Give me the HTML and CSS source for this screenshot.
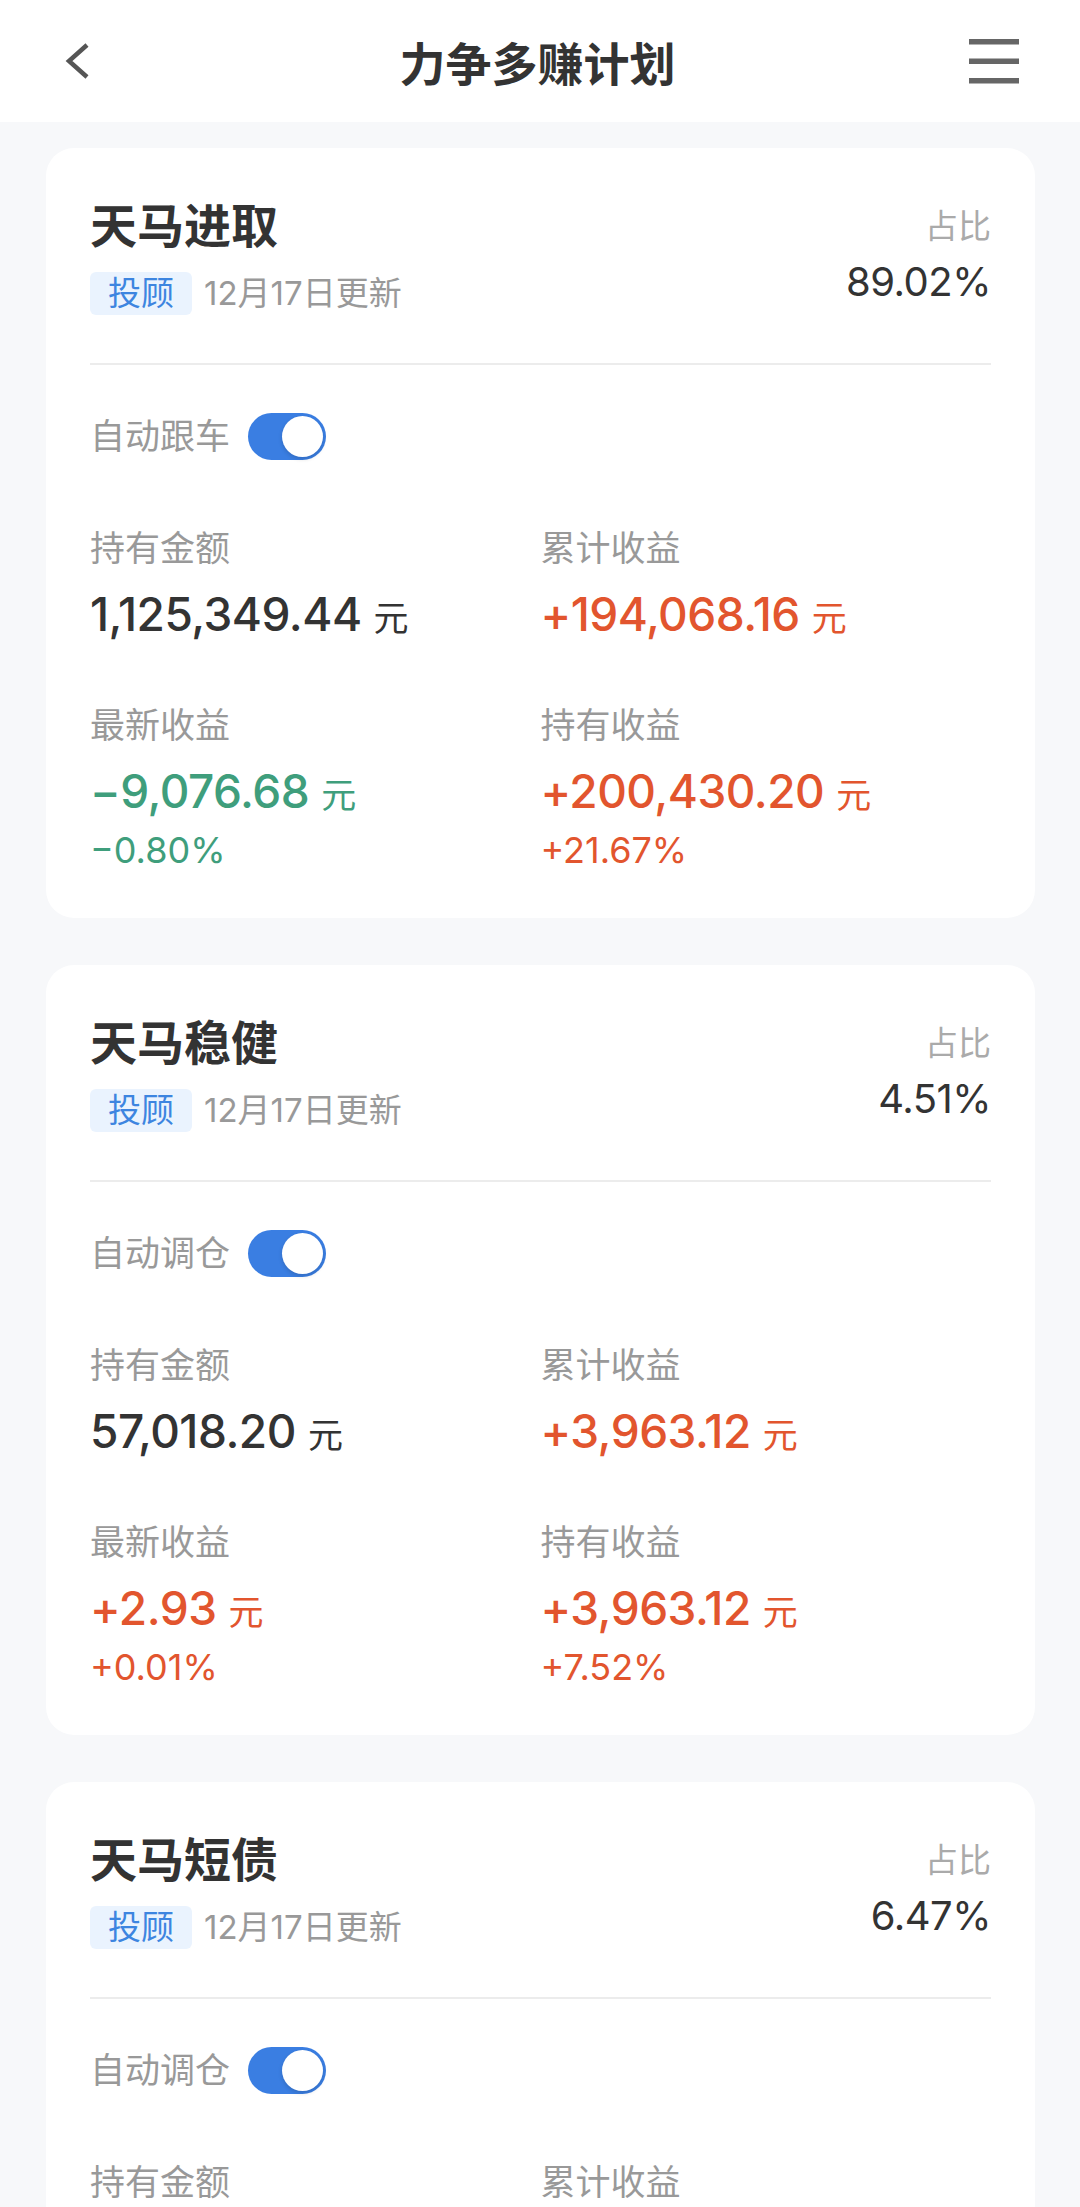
FILE: index.html
```html
<!DOCTYPE html>
<html lang="zh-CN">
<head>
  <meta charset="UTF-8" />
  <meta name="viewport" content="width=device-width, initial-scale=1.0"/>
  <title>力争多赚计划</title>
  <link rel="stylesheet" href="styles.css">
</head>
<body>
  <header class="nav">
    <a class="nav-back" href="#">
      <svg width="40" height="40" viewBox="0 0 40 40"><polyline points="31,4 13,20 31,36" fill="none" stroke="#555" stroke-width="4.5"/></svg>
    </a>
    <h1 class="nav-title">力争多赚计划</h1>
    <a class="nav-menu" href="#">
      <svg width="50" height="50" viewBox="0 0 50 50" fill="#666">
        <rect x="0" y="3" width="50" height="5.5"/>
        <rect x="0" y="22.5" width="50" height="5.5"/>
        <rect x="0" y="42" width="50" height="5.5"/>
      </svg>
    </a>
  </header>

  <main class="plans">
    <!-- 天马进取 -->
    <section class="plan-card">
      <div class="plan-head">
        <div>
          <h2 class="plan-name">天马进取</h2>
          <div class="plan-meta"><span class="tag">投顾</span><span class="plan-date">12月17日更新</span></div>
        </div>
        <div class="plan-ratio">
          <div class="ratio-label">占比</div>
          <div class="ratio-value">89.02%</div>
        </div>
      </div>
      <div class="plan-switch"><span>自动跟车</span><span class="toggle"></span></div>
      <div class="plan-stats">
        <div class="stat">
          <div class="stat-label">持有金额</div>
          <div class="stat-value">1,125,349.44<span class="unit">元</span></div>
        </div>
        <div class="stat">
          <div class="stat-label">累计收益</div>
          <div class="stat-value up">+194,068.16<span class="unit">元</span></div>
        </div>
        <div class="stat">
          <div class="stat-label">最新收益</div>
          <div class="stat-value down">−9,076.68<span class="unit">元</span></div>
          <div class="stat-rate down">−0.80%</div>
        </div>
        <div class="stat">
          <div class="stat-label">持有收益</div>
          <div class="stat-value up">+200,430.20<span class="unit">元</span></div>
          <div class="stat-rate up">+21.67%</div>
        </div>
      </div>
    </section>

    <!-- 天马稳健 -->
    <section class="plan-card">
      <div class="plan-head">
        <div>
          <h2 class="plan-name">天马稳健</h2>
          <div class="plan-meta"><span class="tag">投顾</span><span class="plan-date">12月17日更新</span></div>
        </div>
        <div class="plan-ratio">
          <div class="ratio-label">占比</div>
          <div class="ratio-value">4.51%</div>
        </div>
      </div>
      <div class="plan-switch"><span>自动调仓</span><span class="toggle"></span></div>
      <div class="plan-stats">
        <div class="stat">
          <div class="stat-label">持有金额</div>
          <div class="stat-value">57,018.20<span class="unit">元</span></div>
        </div>
        <div class="stat">
          <div class="stat-label">累计收益</div>
          <div class="stat-value up">+3,963.12<span class="unit">元</span></div>
        </div>
        <div class="stat">
          <div class="stat-label">最新收益</div>
          <div class="stat-value up">+2.93<span class="unit">元</span></div>
          <div class="stat-rate up">+0.01%</div>
        </div>
        <div class="stat">
          <div class="stat-label">持有收益</div>
          <div class="stat-value up">+3,963.12<span class="unit">元</span></div>
          <div class="stat-rate up">+7.52%</div>
        </div>
      </div>
    </section>

    <!-- 天马短债 -->
    <section class="plan-card">
      <div class="plan-head">
        <div>
          <h2 class="plan-name">天马短债</h2>
          <div class="plan-meta"><span class="tag">投顾</span><span class="plan-date">12月17日更新</span></div>
        </div>
        <div class="plan-ratio">
          <div class="ratio-label">占比</div>
          <div class="ratio-value">6.47%</div>
        </div>
      </div>
      <div class="plan-switch"><span>自动调仓</span><span class="toggle"></span></div>
      <div class="plan-stats">
        <div class="stat">
          <div class="stat-label">持有金额</div>
        </div>
        <div class="stat">
          <div class="stat-label">累计收益</div>
        </div>
      </div>
    </section>
  </main>
</body>
</html>
```

FILE: styles.css
```css
:root {
  --bg: #f7f8fa;
  --text: #333;
  --muted: #999;
  --line: #ececec;
  --blue: #3a7ee2;
  --up: #e2552e;
  --down: #3f9e7c;
}

body {
  margin: 0;
  background: var(--bg);
  color: var(--text);
  font-family: Inter, "Noto Sans CJK SC", sans-serif;
}

/* top bar */
.nav {
  height: 122px;
  background: #fff;
  display: grid;
  grid-template-columns: 1fr auto 1fr;
  align-items: center;
  padding: 0 61px 0 56px;
}

.nav-back, .nav-menu {
  display: flex;
}

.nav-menu {
  justify-self: end;
}

.nav-title {
  margin: 0;
  font-size: 46px;
  font-weight: 700;
  color: var(--text);
}

/* cards */
.plans {
  display: flex;
  flex-direction: column;
  gap: 47px;
  padding: 26px 45px 0 46px;
}

.plan-card {
  background: #fff;
  border-radius: 28px;
  padding: 0 44px 46px;
}

.plan-head {
  display: flex;
  justify-content: space-between;
  padding: 52px 0 48px;
  border-bottom: 2px solid var(--line);
}

.plan-name {
  margin: 0;
  font-size: 47px;
  line-height: 52px;
  font-weight: 600;
}

.plan-meta {
  display: flex;
  align-items: center;
  gap: 12px;
  height: 43px;
  margin-top: 20px;
}

.tag {
  height: 43px;
  line-height: 43px;
  padding: 0 18px;
  font-size: 33px;
  color: #3d85e0;
  background: #eaf3fe;
  border-radius: 6px;
}

.plan-date {
  font-size: 33px;
  line-height: 43px;
  color: var(--muted);
}

.plan-ratio {
  text-align: right;
}

.ratio-label {
  font-size: 33px;
  line-height: 52px;
  color: #aaa;
}

.ratio-value {
  margin-top: 6px;
  font-size: 40px;
  line-height: 48px;
  letter-spacing: -0.5px;
}

.plan-switch {
  display: flex;
  align-items: center;
  gap: 18px;
  height: 47px;
  padding-top: 48px;
  font-size: 35px;
  line-height: 47px;
  color: var(--muted);
}

.toggle {
  position: relative;
  width: 78px;
  height: 47px;
  border-radius: 24px;
  background: var(--blue);
}

.toggle::after {
  content: "";
  position: absolute;
  top: 3px;
  right: 3px;
  width: 41px;
  height: 41px;
  border-radius: 50%;
  background: #fff;
  box-shadow: 0 2px 4px rgba(0, 0, 0, 0.15);
}

.plan-stats {
  display: grid;
  grid-template-columns: 1fr 1fr;
  row-gap: 63px;
  margin-top: 68px;
}

.stat-label {
  font-size: 35px;
  line-height: 40px;
  color: var(--muted);
}

.stat-value {
  margin-top: 18px;
  font-size: 46px;
  line-height: 56px;
  font-weight: 500;
  letter-spacing: -0.5px;
}

.unit {
  margin-left: 12px;
  font-size: 35px;
  line-height: 1;
  font-weight: 400;
  letter-spacing: 0;
}

.stat-rate {
  margin-top: 9px;
  font-size: 36px;
  line-height: 44px;
}

.up {
  color: var(--up);
}

.down {
  color: var(--down);
}
```
